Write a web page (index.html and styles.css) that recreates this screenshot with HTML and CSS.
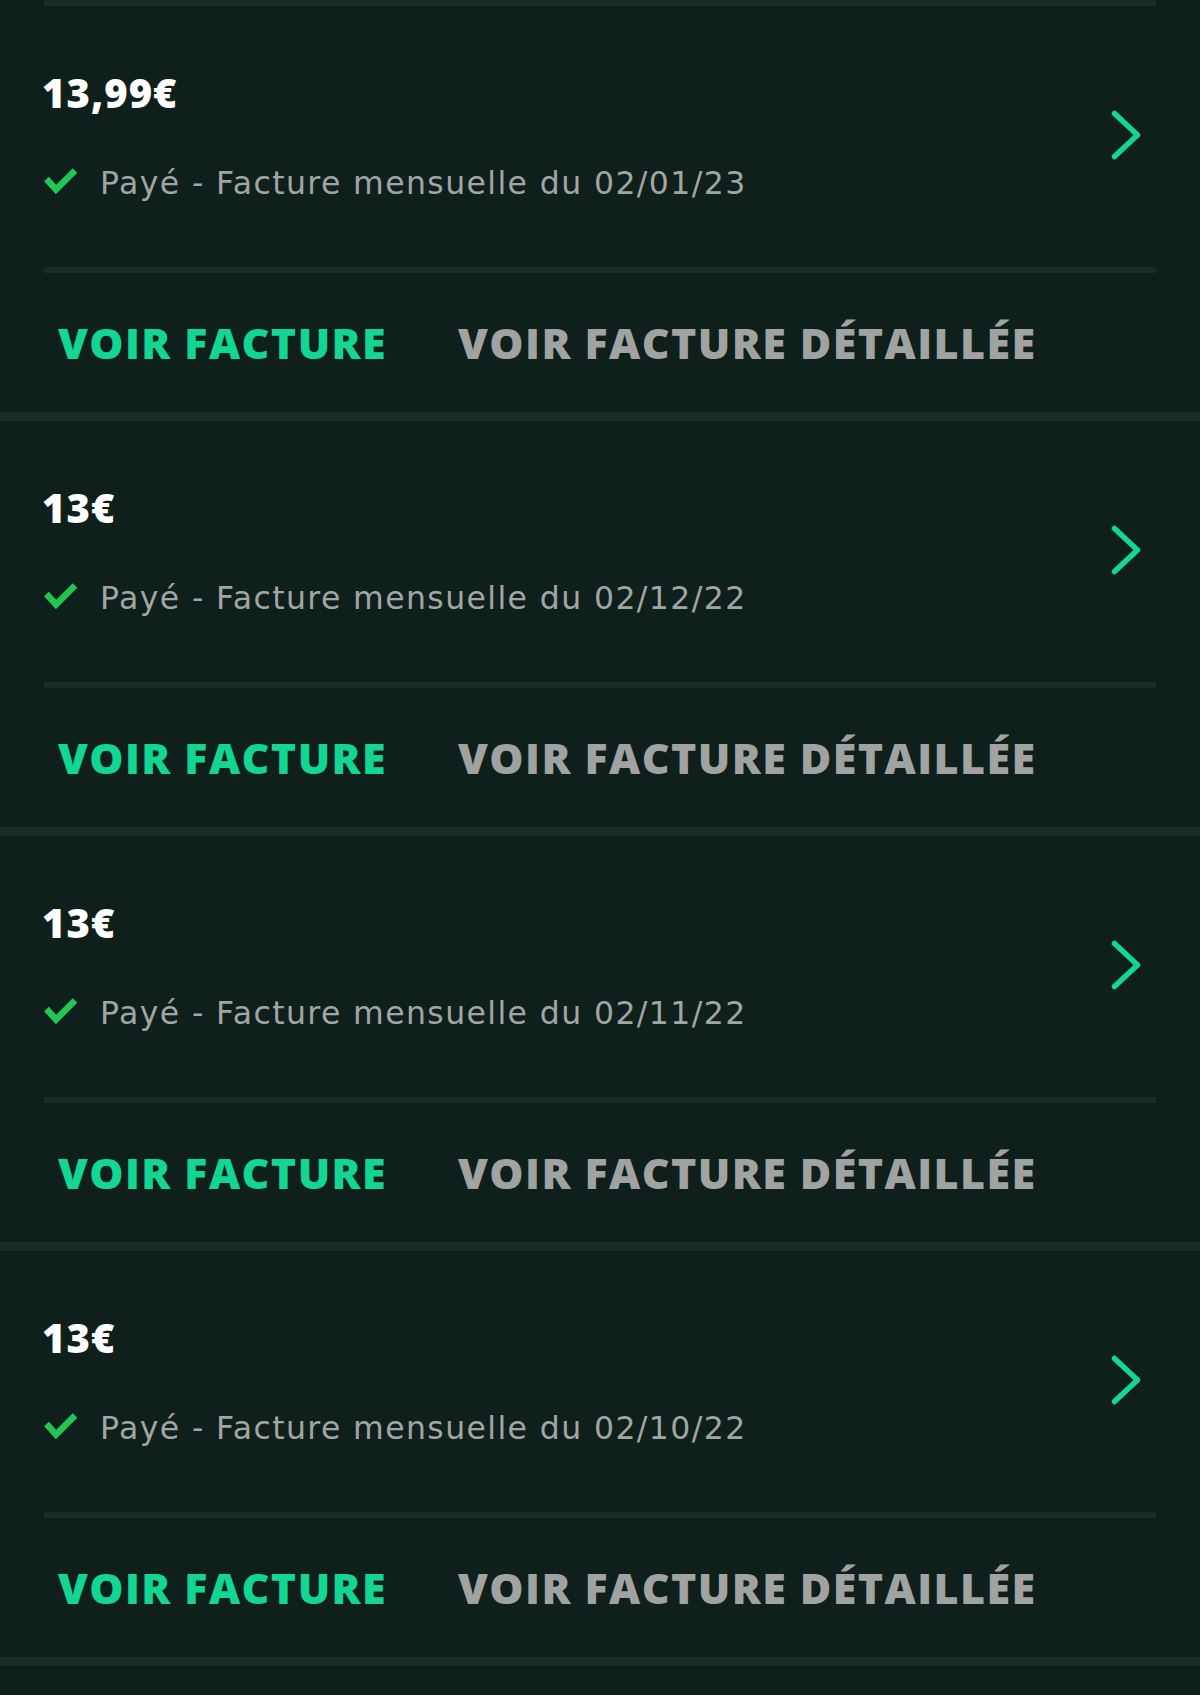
FILE: index.html
```html
<!DOCTYPE html>
<html lang="fr">
<head>
<meta charset="utf-8">
<title>Factures</title>
<link rel="stylesheet" href="styles.css">
</head>
<body>
<div class="top-line"></div>

<section class="invoice">
  <div class="invoice-main">
    <div class="invoice-info">
      <div class="amount">13,99€</div>
      <div class="status">
        <svg class="check" viewBox="0 0 34 30" width="34" height="30"><polyline points="2.5,11 12,21.5 31,2.5" fill="none" stroke="#21c653" stroke-width="6.5"/></svg>
        <span>Payé - Facture mensuelle du 02/01/23</span>
      </div>
    </div>
    <svg class="chevron" viewBox="0 0 30 50" width="30" height="50"><polyline points="3.5,3.5 26.5,25 3.5,46.5" fill="none" stroke="#12d692" stroke-width="5.5" stroke-linecap="round" stroke-linejoin="round"/></svg>
  </div>
  <div class="invoice-actions">
    <a class="btn btn-primary">VOIR FACTURE</a>
    <a class="btn btn-secondary">VOIR FACTURE DÉTAILLÉE</a>
  </div>
</section>

<section class="invoice">
  <div class="invoice-main">
    <div class="invoice-info">
      <div class="amount">13€</div>
      <div class="status">
        <svg class="check" viewBox="0 0 34 30" width="34" height="30"><polyline points="2.5,11 12,21.5 31,2.5" fill="none" stroke="#21c653" stroke-width="6.5"/></svg>
        <span>Payé - Facture mensuelle du 02/12/22</span>
      </div>
    </div>
    <svg class="chevron" viewBox="0 0 30 50" width="30" height="50"><polyline points="3.5,3.5 26.5,25 3.5,46.5" fill="none" stroke="#12d692" stroke-width="5.5" stroke-linecap="round" stroke-linejoin="round"/></svg>
  </div>
  <div class="invoice-actions">
    <a class="btn btn-primary">VOIR FACTURE</a>
    <a class="btn btn-secondary">VOIR FACTURE DÉTAILLÉE</a>
  </div>
</section>

<section class="invoice">
  <div class="invoice-main">
    <div class="invoice-info">
      <div class="amount">13€</div>
      <div class="status">
        <svg class="check" viewBox="0 0 34 30" width="34" height="30"><polyline points="2.5,11 12,21.5 31,2.5" fill="none" stroke="#21c653" stroke-width="6.5"/></svg>
        <span>Payé - Facture mensuelle du 02/11/22</span>
      </div>
    </div>
    <svg class="chevron" viewBox="0 0 30 50" width="30" height="50"><polyline points="3.5,3.5 26.5,25 3.5,46.5" fill="none" stroke="#12d692" stroke-width="5.5" stroke-linecap="round" stroke-linejoin="round"/></svg>
  </div>
  <div class="invoice-actions">
    <a class="btn btn-primary">VOIR FACTURE</a>
    <a class="btn btn-secondary">VOIR FACTURE DÉTAILLÉE</a>
  </div>
</section>

<section class="invoice">
  <div class="invoice-main">
    <div class="invoice-info">
      <div class="amount">13€</div>
      <div class="status">
        <svg class="check" viewBox="0 0 34 30" width="34" height="30"><polyline points="2.5,11 12,21.5 31,2.5" fill="none" stroke="#21c653" stroke-width="6.5"/></svg>
        <span>Payé - Facture mensuelle du 02/10/22</span>
      </div>
    </div>
    <svg class="chevron" viewBox="0 0 30 50" width="30" height="50"><polyline points="3.5,3.5 26.5,25 3.5,46.5" fill="none" stroke="#12d692" stroke-width="5.5" stroke-linecap="round" stroke-linejoin="round"/></svg>
  </div>
  <div class="invoice-actions">
    <a class="btn btn-primary">VOIR FACTURE</a>
    <a class="btn btn-secondary">VOIR FACTURE DÉTAILLÉE</a>
  </div>
</section>
</body>
</html>
```

FILE: styles.css
```css
html, body {
  margin: 0;
  padding: 0;
}

body {
  background: #0f1f1b;
  font-family: "Open Sans", "Liberation Sans", sans-serif;
  color: #ffffff;
}

.top-line {
  height: 6px;
  margin: 0 44px;
  background: #1b2c28;
}

.invoice {
  border-bottom: 9px solid #1b2c28;
}

.invoice-main {
  margin: 0 44px;
  padding: 63px 0 66px;
  border-bottom: 6px solid #1b2c28;
  display: flex;
  align-items: center;
  justify-content: space-between;
}

.amount {
  margin-left: -2px;
  font-family: "Open Sans", sans-serif;
  font-weight: 800;
  font-size: 40px;
  line-height: 48px;
  letter-spacing: 1px;
  color: #ffffff;
}

.status {
  margin-top: 48px;
  display: flex;
  align-items: center;
  gap: 22px;
  font-family: "DejaVu Sans", sans-serif;
  font-size: 31.5px;
  line-height: 36px;
  letter-spacing: 1.4px;
  color: #a1a5a3;
}

.check {
  display: block;
  flex: none;
}

.chevron {
  display: block;
  flex: none;
  margin-right: 15px;
}

.invoice-actions {
  height: 139px;
  padding-left: 58px;
  display: flex;
  align-items: center;
  gap: 71px;
}

.btn {
  font-family: "Open Sans", sans-serif;
  font-weight: 800;
  font-size: 43px;
  line-height: 52px;
  letter-spacing: 1.4px;
  text-decoration: none;
}

.btn-primary {
  color: #12d692;
}

.btn-secondary {
  color: #a0a3a1;
}
```
